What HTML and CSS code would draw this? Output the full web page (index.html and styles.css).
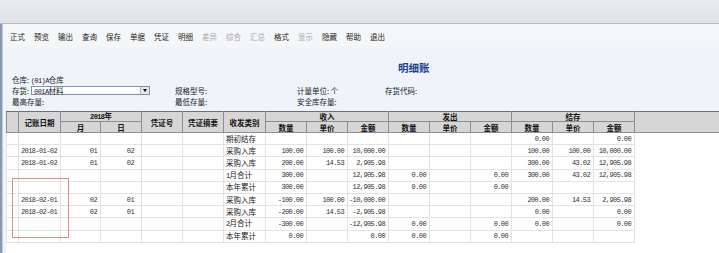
FILE: index.html
```html
<!DOCTYPE html>
<html lang="zh-CN">
<head>
<meta charset="utf-8">
<title>明细账</title>
<link rel="stylesheet" href="styles.css">
</head>
<body>
<div class="window">
  <div class="topbar"></div>
  <div class="main">
    <div class="leftbar"></div>
    <div class="content">
      <div class="toolbar">
        <span class="tb">正式</span>
        <span class="tb">预览</span>
        <span class="tb">输出</span>
        <span class="tb">查询</span>
        <span class="tb">保存</span>
        <span class="tb">单据</span>
        <span class="tb">凭证</span>
        <span class="tb">明细</span>
        <span class="tb off">差异</span>
        <span class="tb off">综合</span>
        <span class="tb off">汇总</span>
        <span class="tb">格式</span>
        <span class="tb off">显示</span>
        <span class="tb">隐藏</span>
        <span class="tb">帮助</span>
        <span class="tb">退出</span>
      </div>
      <div class="report">
        <div class="title">明细账</div>
        <div class="info">
          <div class="line1">仓库: <span class="lat">(01)A</span>仓库</div>
          <div class="line">
            <div class="cell">存货:
              <div class="combo"><span class="lat">001A</span>材料<span class="drop"></span></div>
            </div>
            <div class="cell">规格型号:</div>
            <div class="cell">计量单位: 个</div>
            <div class="cell">存货代码:</div>
          </div>
          <div class="line">
            <div class="cell">最高存量:</div>
            <div class="cell">最低存量:</div>
            <div class="cell">安全库存量:</div>
            <div class="cell"></div>
          </div>
        </div>
      </div>
      <div class="gridwrap">
        <table class="grid">
          <colgroup>
            <col class="w12"><col class="w42"><col class="w40"><col class="w41"><col class="w41"><col class="w41"><col class="w42">
            <col class="w41"><col class="w41"><col class="w41">
            <col class="w41"><col class="w41"><col class="w41">
            <col class="w41"><col class="w41"><col class="w41">
            <col class="w85">
          </colgroup>
          <thead>
            <tr class="h1">
              <th rowspan="2"></th>
              <th rowspan="2">记账日期</th>
              <th colspan="2"><span class="latb">2018</span>年</th>
              <th rowspan="2">凭证号</th>
              <th rowspan="2">凭证摘要</th>
              <th rowspan="2">收发类别</th>
              <th colspan="3">收入</th>
              <th colspan="3">发出</th>
              <th colspan="3">结存</th>
              <th rowspan="2" class="fill"></th>
            </tr>
            <tr class="h2">
              <th>月</th><th>日</th>
              <th>数量</th><th>单价</th><th>金额</th>
              <th>数量</th><th>单价</th><th>金额</th>
              <th>数量</th><th>单价</th><th>金额</th>
            </tr>
          </thead>
          <tbody>
            <tr><td></td><td></td><td></td><td></td><td></td><td></td><td class="t">期初结存</td>
              <td></td><td></td><td></td><td></td><td></td><td></td><td class="n">0.00</td><td></td><td class="n">0.00</td><td class="e"></td></tr>
            <tr><td></td><td class="d">2018-01-02</td><td class="m">01</td><td class="dd">02</td><td></td><td></td><td class="t">采购入库</td>
              <td class="n">100.00</td><td class="n">100.00</td><td class="n">10,000.00</td><td></td><td></td><td></td><td class="n">100.00</td><td class="n">100.00</td><td class="n">10,000.00</td><td class="e"></td></tr>
            <tr><td></td><td class="d">2018-01-02</td><td class="m">01</td><td class="dd">02</td><td></td><td></td><td class="t">采购入库</td>
              <td class="n">200.00</td><td class="n">14.53</td><td class="n">2,905.98</td><td></td><td></td><td></td><td class="n">300.00</td><td class="n">43.02</td><td class="n">12,905.98</td><td class="e"></td></tr>
            <tr><td></td><td></td><td></td><td></td><td></td><td></td><td class="t"><span class="lat">1</span>月合计</td>
              <td class="n">300.00</td><td></td><td class="n">12,905.98</td><td class="n">0.00</td><td></td><td class="n">0.00</td><td class="n">300.00</td><td class="n">43.02</td><td class="n">12,905.98</td><td class="e"></td></tr>
            <tr><td></td><td></td><td></td><td></td><td></td><td></td><td class="t">本年累计</td>
              <td class="n">300.00</td><td></td><td class="n">12,905.98</td><td class="n">0.00</td><td></td><td class="n">0.00</td><td></td><td></td><td></td><td class="e"></td></tr>
            <tr><td></td><td class="d">2018-02-01</td><td class="m">02</td><td class="dd">01</td><td></td><td></td><td class="t">采购入库</td>
              <td class="n">-100.00</td><td class="n">100.00</td><td class="n">-10,000.00</td><td></td><td></td><td></td><td class="n">200.00</td><td class="n">14.53</td><td class="n">2,905.98</td><td class="e"></td></tr>
            <tr><td></td><td class="d">2018-02-01</td><td class="m">02</td><td class="dd">01</td><td></td><td></td><td class="t">采购入库</td>
              <td class="n">-200.00</td><td class="n">14.53</td><td class="n">-2,905.98</td><td></td><td></td><td></td><td class="n">0.00</td><td></td><td class="n">0.00</td><td class="e"></td></tr>
            <tr><td></td><td></td><td></td><td></td><td></td><td></td><td class="t"><span class="lat">2</span>月合计</td>
              <td class="n">-300.00</td><td></td><td class="n">-12,905.98</td><td class="n">0.00</td><td></td><td class="n">0.00</td><td class="n">0.00</td><td></td><td class="n">0.00</td><td class="e"></td></tr>
            <tr><td></td><td></td><td></td><td></td><td></td><td></td><td class="t">本年累计</td>
              <td class="n">0.00</td><td></td><td class="n">0.00</td><td class="n">0.00</td><td></td><td class="n">0.00</td><td></td><td></td><td></td><td class="e"></td></tr>
          </tbody>
        </table>
        <div class="mark"></div>
      </div>
    </div>
  </div>
</div>
</body>
</html>
```

FILE: styles.css
```css
html, body {
  margin: 0;
  padding: 0;
}
body {
  width: 719px;
  height: 253px;
  overflow: hidden;
  background: #eef4fa;
  font-family: "Noto Sans CJK SC", "Liberation Sans", sans-serif;
  font-size: 7.5px;
  color: #1a1a1a;
}
.window {
  display: flex;
  flex-direction: column;
  height: 253px;
}
.topbar {
  height: 23px;
  background: linear-gradient(#e9ebee, #dfe2e6);
  border-bottom: 1px solid #b4bcc6;
}
.main {
  flex: 1;
  display: flex;
  min-height: 0;
}
.leftbar {
  width: 2px;
  background: #8699b4;
  border-right: 1px solid #c3cdd9;
}
.content {
  flex: 1;
  display: flex;
  flex-direction: column;
  min-width: 0;
}
.toolbar {
  height: 26px;
  box-sizing: border-box;
  padding: 8px 0 0 7px;
  display: flex;
  gap: 9px;
  background: linear-gradient(#f5f6f8 0, #f5f6f8 21px, #eef4fa 26px);
  line-height: 10px;
}
.tb {
  width: 15px;
  white-space: nowrap;
  color: #1c1c1c;
}
.tb.off {
  color: #a8a8a8;
}
.lat, .latb {
  font-family: "Liberation Mono", monospace;
  font-size: 7px;
  letter-spacing: -0.6px;
}
.latb {
  font-weight: bold;
}
.report {
  padding: 12px 0 4px 9px;
}
.title {
  height: 12px;
  line-height: 12px;
  padding-left: 386px;
  font-size: 10.5px;
  font-weight: bold;
  color: #1d3f8e;
}
.info {
  display: flex;
  flex-direction: column;
}
.line1 {
  height: 11px;
  line-height: 11px;
}
.line {
  height: 11px;
  line-height: 11px;
  display: grid;
  grid-template-columns: 163px 122px 88px 1fr;
}
.cell {
  display: flex;
  align-items: center;
  white-space: nowrap;
}
.combo {
  position: relative;
  margin-left: 2px;
  width: 119px;
  height: 9px;
  box-sizing: border-box;
  border: 1px solid #7f93ad;
  background: #fff;
  line-height: 7px;
  padding-left: 2px;
}
.drop {
  position: absolute;
  right: 0;
  top: 0;
  width: 8px;
  height: 7px;
  background: #e6e6e6;
  border-left: 1px solid #b5b5b5;
}
.drop::after {
  content: "";
  position: absolute;
  left: 2px;
  top: 2px;
  border-left: 2px solid transparent;
  border-right: 2px solid transparent;
  border-top: 3px solid #000;
}
.gridwrap {
  flex: 1;
  position: relative;
  padding-left: 3px;
  background: linear-gradient(90deg, #eef4fa 0, #eef4fa 3px, #fff 3px);
}
.grid {
  border-collapse: collapse;
  table-layout: fixed;
  width: 713px;
}
.w12 { width: 12px; }
.w40 { width: 40px; }
.w41 { width: 41px; }
.w42 { width: 42px; }
.w85 { width: 85px; }
.grid th {
  background: #d6d6d6;
  border: 1px solid #8e8e8e;
  padding: 0;
  font-weight: bold;
  color: #111;
  text-align: center;
  overflow: hidden;
  white-space: nowrap;
}
.grid thead tr:first-child th {
  border-top-color: #6f6f6f;
}
.h1 { height: 8px; }
.h1 th { line-height: 7px; }
.h2 { height: 11px; }
.h2 th { line-height: 9px; }
.grid th.fill {
  border-right: none;
}
.grid tbody tr {
  height: 12.2px;
}
.grid td {
  padding: 0;
  border: 1px solid #e3e3e3;
  background: #fff;
  line-height: 10px;
  white-space: nowrap;
  overflow: hidden;
}
.grid td.e {
  border: none;
  border-left: 1px solid #e3e3e3;
}
.grid td.t {
  padding-left: 2px;
}
.grid td.d, .grid td.m, .grid td.dd, .grid td.n {
  font-family: "Liberation Mono", monospace;
  font-size: 7px;
  letter-spacing: -0.6px;
  color: #333;
}
.grid td.d {
  padding-left: 2px;
}
.grid td.m, .grid td.dd, .grid td.n {
  text-align: right;
}
.grid td.m { padding-right: 3px; }
.grid td.dd { padding-right: 7px; }
.grid td.n { padding-right: 3px; }
.mark {
  position: absolute;
  left: 9px;
  top: 67px;
  width: 57px;
  height: 60px;
  box-sizing: border-box;
  border: 1px solid #e28a8a;
}
```
